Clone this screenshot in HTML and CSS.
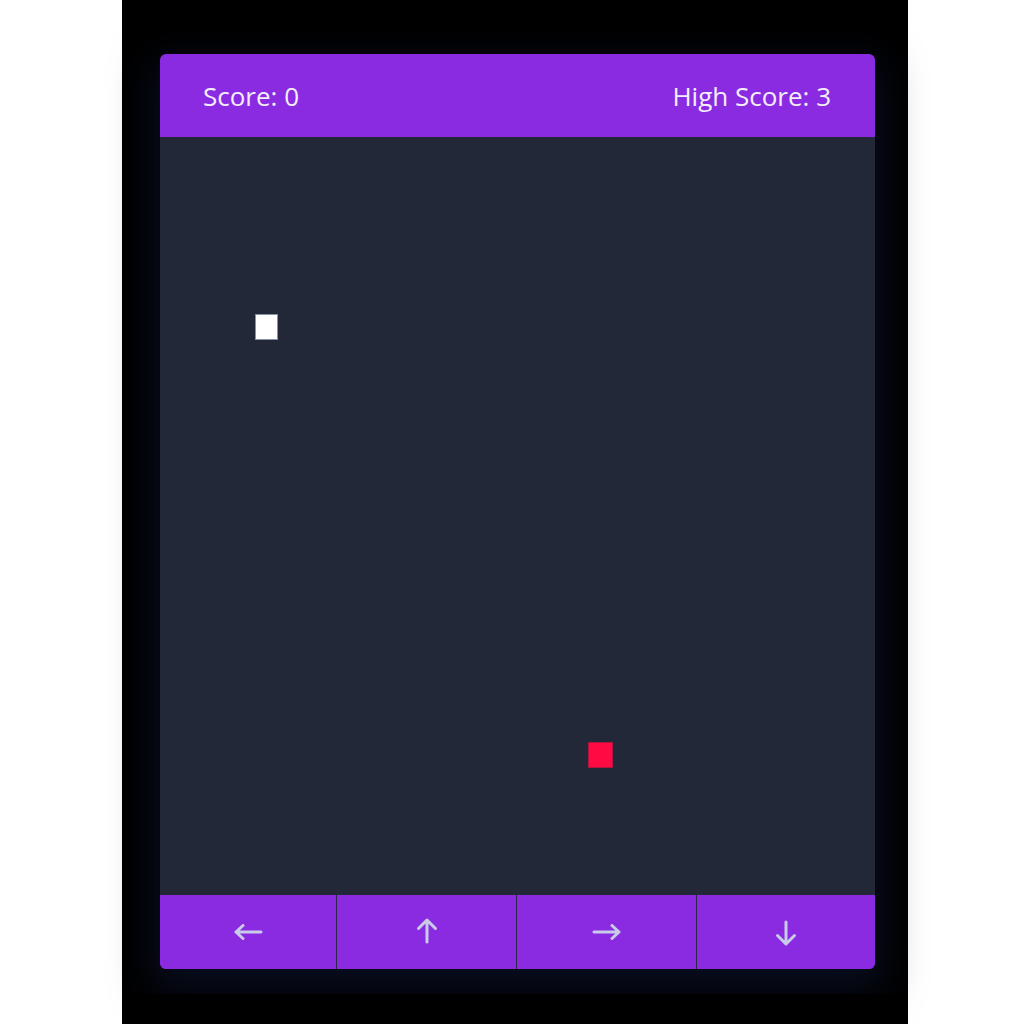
FILE: index.html
```html
<!DOCTYPE html>
<html>
<head>
<meta charset="utf-8">
<link rel="stylesheet" href="styles.css">
</head>
<body>
<div class="stage">
  <div class="card">
    <header class="bar">
      <span class="score">Score: 0</span>
      <span class="score">High Score: 3</span>
    </header>
    <div class="board">
      <div class="cell snake" style="left:95px;top:177px"></div>
      <div class="cell food" style="left:428px;top:605px"></div>
    </div>
    <div class="controls">
      <button class="btn" aria-label="Left">
        <svg class="arrow-h" width="30" height="16" viewBox="0 0 30 16"><path d="M28 8H3M10 1.5L3 8l7 6.5"/></svg>
      </button>
      <button class="btn" aria-label="Up">
        <svg class="arrow-v" width="22" height="27" viewBox="0 0 22 27"><path d="M11 25V3M2.5 11.5L11 3l8.5 8.5"/></svg>
      </button>
      <button class="btn" aria-label="Right">
        <svg class="arrow-h" width="30" height="16" viewBox="0 0 30 16"><path d="M2 8h25M20 1.5L27 8l-7 6.5"/></svg>
      </button>
      <button class="btn" aria-label="Down">
        <svg class="arrow-v down" width="22" height="27" viewBox="0 0 22 27"><path d="M11 2v22M2.5 15.5L11 24l8.5-8.5"/></svg>
      </button>
    </div>
  </div>
  <div class="floor"></div>
</div>
</body>
</html>
```
FILE: styles.css
```css
html, body {
  margin: 0;
  padding: 0;
  background: #ffffff;
  height: 1024px;
  overflow: hidden;
}
.stage {
  margin-left: 122px;
  width: 786px;
  height: 1024px;
  background: #000000;
  padding: 54px 0 0 38px;
  box-sizing: border-box;
  display: flex;
  flex-direction: column;
  align-items: flex-start;
  position: relative;
}
.card {
  width: 715px;
  border-radius: 6px;
  overflow: hidden;
  display: flex;
  flex-direction: column;
  box-shadow: 0 14px 40px 8px rgba(16, 24, 56, 0.55);
  font-family: "Open Sans", "Noto Sans", sans-serif;
}
.bar {
  height: 83px;
  background: #8a2be2;
  display: flex;
  align-items: center;
  justify-content: space-between;
  padding: 0 44px 0 43px;
  box-sizing: border-box;
}
.score {
  color: #f4eefc;
  font-size: 26px;
  font-weight: 500;
}
.board {
  height: 758px;
  background: #222838;
  position: relative;
}
.cell {
  position: absolute;
  width: 23px;
  height: 26px;
  box-sizing: border-box;
}
.snake {
  background: #ffffff;
  border: 1px solid #8890a8;
}
.food {
  width: 25px;
  background: #ff0a42;
  border: 1px solid #b01440;
}
.controls {
  display: grid;
  grid-template-columns: 177px 180px 180px 178px;
  height: 74px;
  background: #8a2be2;
}
.btn {
  border: 0;
  border-right: 1px solid #2e2448;
  background: #8a2be2;
  padding: 0;
  margin: 0;
  display: flex;
  align-items: center;
  justify-content: center;
}
.btn:last-child {
  border-right: 0;
}
.btn svg {
  fill: none;
  stroke: #c8cce8;
  stroke-width: 3;
  stroke-linecap: round;
  stroke-linejoin: round;
}
.arrow-v {
  margin-top: -4px;
}
.arrow-v.down {
  margin-top: 2px;
}
.floor {
  position: absolute;
  left: 0;
  right: 0;
  bottom: 0;
  height: 30px;
  background: #000;
}
```
